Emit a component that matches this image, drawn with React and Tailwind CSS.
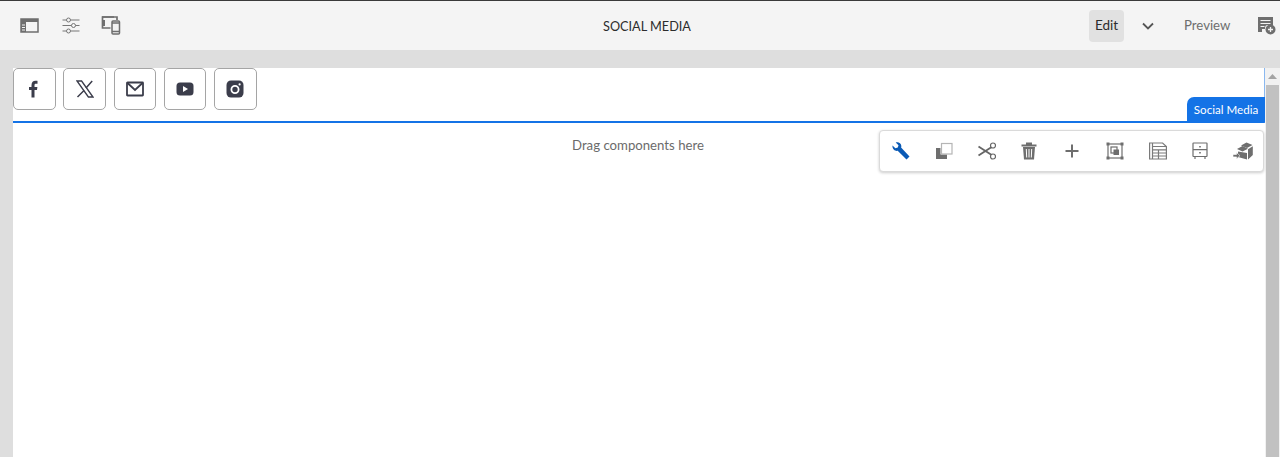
import React from 'react';

const font = "[font-family:Lato,'Noto_Sans',sans-serif]";

const PanelIcon = () => (
  <svg width="20" height="18" viewBox="0 0 20 18" fill="none">
    <rect x="1" y="2" width="17" height="13" stroke="#6e6e6e" strokeWidth="1.5" />
    <rect x="1" y="2" width="17" height="3" fill="#6e6e6e" />
    <rect x="1" y="5" width="5" height="10" fill="#6e6e6e" />
    <path d="M2 8h3M2 10.500h3M2 13h3" stroke="#f3f3f3" strokeWidth="1" />
  </svg>
);

const SlidersIcon = () => (
  <svg width="18" height="18" viewBox="0 0 18 18" fill="none" stroke="#777" strokeWidth="1">
    <path d="M0.500 3h4M8.500 3h9M0.500 8.500h9M13.500 8.500h4M0.500 14h4M8.500 14h9" />
    <circle cx="6.500" cy="3" r="2" />
    <circle cx="11.500" cy="8.500" r="2" />
    <circle cx="6.500" cy="14" r="2" />
  </svg>
);

const DevicesIcon = () => (
  <svg width="20" height="19" viewBox="0 0 20 19" fill="none">
    <path d="M13 1H1.500v11h8" stroke="#6e6e6e" strokeWidth="1.700" />
    <path d="M1 1h15v3" stroke="#6e6e6e" strokeWidth="1.700" />
    <path d="M1 4h3v6H1z" fill="#6e6e6e" />
    <rect x="11" y="5" width="7.500" height="13" rx="1" stroke="#6e6e6e" strokeWidth="1.500" fill="#f3f3f3" />
    <path d="M11 7h7.500M11 15.500h7.500" stroke="#6e6e6e" strokeWidth="1.500" />
  </svg>
);

const NoteAddIcon = () => (
  <svg width="19" height="19" viewBox="0 0 19 19" fill="none">
    <path d="M1 1h15v8h-5a3 3 0 0 0-3 3v1H5v3H1z" fill="#6e6e6e" />
    <path d="M3.500 4.500h10M3.500 7.500h10M3.500 10.500h4" stroke="#f3f3f3" strokeWidth="1.200" />
    <circle cx="13.500" cy="13.500" r="5" fill="#6e6e6e" />
    <path d="M13.500 11v5M11 13.500h5" stroke="#f3f3f3" strokeWidth="1.300" />
  </svg>
);

const Facebook = () => (
  <svg width="18" height="18" viewBox="0 0 18 18">
    <path d="M6.500 17.500V10H4V7h2.500V5c0-2.700 1.600-4.200 4-4.200 1 0 1.800.1 2 .1v2.800H11c-1.200 0-1.500.6-1.500 1.400V7h2.900l-.4 3H9.500v7.500z" fill="#3b3d4b" />
  </svg>
);

const XLogo = () => (
  <svg width="18" height="18" viewBox="0 0 18 18" fill="none" stroke="#3b3d4b">
    <path d="M1 1h4.600l11.400 16h-4.600z" strokeWidth="1.300" />
    <path d="M16.200 1 10 8M8 10.500 1.500 17" strokeWidth="1.500" />
  </svg>
);

const Mail = () => (
  <svg width="18" height="16" viewBox="0 0 18 16" fill="none" stroke="#3b3d4b" strokeWidth="1.800">
    <rect x="1" y="1.500" width="16" height="13" rx="0.500" />
    <path d="m1.500 2 7.500 7 7.500-7" />
  </svg>
);

const Youtube = () => (
  <svg width="18" height="14" viewBox="0 0 18 14">
    <rect x="0.500" y="0.500" width="17" height="13" rx="3.500" fill="#3b3d4b" />
    <path d="M7 4v6l5-3z" fill="#fff" />
  </svg>
);

const Instagram = () => (
  <svg width="18" height="18" viewBox="0 0 18 18">
    <rect x="0.500" y="0.500" width="17" height="17" rx="4.500" fill="#3b3d4b" />
    <circle cx="9" cy="9.500" r="3.600" fill="none" stroke="#fff" strokeWidth="1.800" />
    <circle cx="13.600" cy="4.400" r="1.100" fill="#fff" />
  </svg>
);

const Wrench = () => (
  <svg width="18" height="18" viewBox="0 0 18 18">
    <path d="M.5 3.500 3.400 6.200l2.400-.7.700-2.300L3.700.6C6.200-.4 9 1 9.300 3.700c.1.700 0 1.300-.2 1.800l8.400 9-3 3-8.800-8.700C3 9.500 0 6.900.5 3.500z" fill="#0a5ab5" />
  </svg>
);

const Copy = () => (
  <svg width="18" height="18" viewBox="0 0 18 18" fill="none">
    <path d="M1 6h4.500v6.500H12V17H1z" fill="#6e6e6e" />
    <rect x="6.500" y="1.500" width="10.500" height="10.500" fill="#fff" stroke="#b5b5b5" strokeWidth="1.200" />
  </svg>
);

const Scissors = () => (
  <svg width="18" height="18" viewBox="0 0 18 18" fill="none" stroke="#666">
    <circle cx="15" cy="3.500" r="2.500" strokeWidth="1.200" />
    <circle cx="15" cy="14.500" r="2.500" strokeWidth="1.200" />
    <path d="M0.500 4.500 13.300 12.800M0.500 13.500 13.300 5.200" strokeWidth="1.800" />
  </svg>
);

const Trash = () => (
  <svg width="16" height="18" viewBox="0 0 16 18">
    <path d="M.5 2.500h15v2H.5zM5 .5h6v2H5z" fill="#6e6e6e" />
    <path d="M2 5h12l-1 12.500H3z" fill="#6e6e6e" />
    <path d="M5.300 7l.4 8.500M8 7v8.500M10.700 7l-.4 8.500" stroke="#fff" strokeWidth="1" />
  </svg>
);

const Plus = () => (
  <svg width="14" height="14" viewBox="0 0 14 14">
    <path d="M6 .500h2V6h5.500v2H8v5.500H6V8H.5V6H6z" fill="#6e6e6e" />
  </svg>
);

const Group = () => (
  <svg width="18" height="18" viewBox="0 0 18 18" fill="none">
    <rect x="2" y="2" width="14" height="14" stroke="#6e6e6e" strokeWidth="1.200" />
    <path d="M0.500.5h3v3h-3zM14.500.5h3v3h-3zM.5 14.500h3v3h-3zM14.500 14.500h3v3h-3z" fill="#6e6e6e" />
    <rect x="5" y="5" width="6" height="6" stroke="#6e6e6e" strokeWidth="1.200" />
    <rect x="7.500" y="7.500" width="5.500" height="5.500" fill="#6e6e6e" />
  </svg>
);

const Table = () => (
  <svg width="18" height="18" viewBox="0 0 18 18" fill="none" stroke="#7a7a7a" strokeWidth="1.200">
    <path d="M.6 1h13l3.800 3.500V17H.6z" />
    <path d="M3.500 4.500h13.900M3.500 7.800h13.900M3.500 11h13.900M3.500 14h13.900M3.500 1v16M9.500 7.800V17" />
  </svg>
);

const Drawers = () => (
  <svg width="16" height="18" viewBox="0 0 16 18" fill="none" stroke="#6e6e6e" strokeWidth="1.200">
    <rect x="1" y="1" width="14" height="13.500" rx="0.500" />
    <path d="M1 7.700h14M3 14.500v2.500M13 14.500v2.500" />
    <path d="M8 4v1.500M8 10v1.500" strokeWidth="1.600" />
  </svg>
);

const Boxes = () => (
  <svg width="20" height="18" viewBox="0 0 20 18">
    <path d="M8 3.500 13.500.5 19.500 3 14 6z" fill="#6e6e6e" />
    <path d="M4 7l5.500-3L15 6.800l-5.500 2.800z" fill="#6e6e6e" />
    <path d="M15 7.200l4.800-3V13L15 17.500z" fill="#6e6e6e" />
    <path d="M5 9.500l9 1.500v6.500L5 15z" fill="#6e6e6e" />
    <path d="M0 12.500h3.500v-2l3.500 3.200-3.500 3.200v-2H0z" fill="#6e6e6e" stroke="#fff" strokeWidth="0.600" />
  </svg>
);

const socialIcons = [Facebook, XLogo, Mail, Youtube, Instagram];
const toolbarIcons = [Wrench, Copy, Scissors, Trash, Plus, Group, Table, Drawers, Boxes];

export default function App() {
  return (
    <div className={`h-[457px] w-[1280px] overflow-hidden flex flex-col bg-[#dedede] ${font}`}>
      <header className="relative h-[50px] shrink-0 flex items-center bg-[#f4f4f4] border-t border-[#3a3a3a]">
        <div className="flex items-center gap-[21.5px] pl-5">
          <PanelIcon />
          <SlidersIcon />
          <DevicesIcon />
        </div>
        <div className="absolute left-0 right-[-14px] top-0 h-[51px] flex items-center justify-center text-[12.7px] text-[#2c2c2c]">
          SOCIAL MEDIA
        </div>
        <div className="ml-auto flex items-center">
          <div className="w-[35px] h-[32px] rounded bg-[#e1e1e1] flex items-center justify-center text-[13.5px] text-[#2c2c2c]">
            Edit
          </div>
          <svg className="ml-[18px]" width="12" height="8" viewBox="0 0 12 8" fill="none" stroke="#555" strokeWidth="1.800">
            <path d="m1 1.500 5 5 5-5" />
          </svg>
          <span className="ml-[30px] w-[47px] text-[13.2px] text-[#6e6e6e]">Preview</span>
          <span className="ml-[26px] w-[23px] flex">
            <NoteAddIcon />
          </span>
        </div>
      </header>

      <div className="flex-1 flex pl-[13px] pt-[18px] min-h-0">
        <main className="relative flex-1 bg-white min-w-0">
          <div className="h-[55px] border-b-2 border-b-[#1473e6] border-r border-r-[#8ab8f0] flex gap-[7.8px] box-border">
            {socialIcons.map((Icon, i) => (
              <div key={i} className="w-[42.5px] h-[42px] rounded-[5px] border border-[#a5a5a5] bg-white flex items-center justify-center">
                <Icon />
              </div>
            ))}
          </div>
          <div className="absolute right-0 top-[29px] w-[78px] h-[25px] flex items-center justify-center rounded-tl-[7px] bg-[#1473e6] text-white text-[11.6px]">
            Social Media
          </div>
          <p className="mt-[13px] pr-[2px] text-center text-[13.2px] leading-[18px] text-[#6b6b6b]">Drag components here</p>
          <div className="absolute right-[1px] top-[62px] w-[385px] h-[42px] flex items-center justify-between pl-[11px] pr-[10px] bg-white rounded border border-[#dadada] shadow-[0_1px_3px_rgba(0,0,0,0.2)]">
            {toolbarIcons.map((Icon, i) => (
              <span key={i} className="w-5 flex justify-center">
                <Icon />
              </span>
            ))}
          </div>
        </main>
        <aside className="w-[15px] shrink-0 flex flex-col bg-[#f1f1f1]">
          <div className="h-[17px] flex items-center justify-center">
            <svg width="9" height="5" viewBox="0 0 9 5">
              <path d="M4.500 0 9 5H0z" fill="#a3a3a3" />
            </svg>
          </div>
          <div className="flex-1 bg-[#c1c1c1] mx-px" />
        </aside>
      </div>
    </div>
  );
}
